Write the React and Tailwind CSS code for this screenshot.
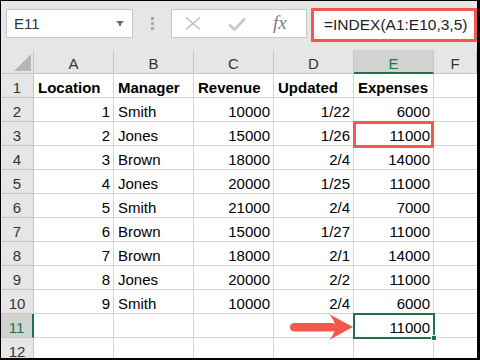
import React from "react";

const rows = [
  ["Location", "Manager", "Revenue", "Updated", "Expenses"],
  ["1", "Smith", "10000", "1/22", "6000"],
  ["2", "Jones", "15000", "1/26", "11000"],
  ["3", "Brown", "18000", "2/4", "14000"],
  ["4", "Jones", "20000", "1/25", "11000"],
  ["5", "Smith", "21000", "2/4", "7000"],
  ["6", "Brown", "15000", "1/27", "11000"],
  ["7", "Brown", "18000", "2/1", "14000"],
  ["8", "Jones", "20000", "2/2", "11000"],
  ["9", "Smith", "10000", "2/4", "6000"],
  ["", "", "", "", "11000"],
  ["", "", "", "", ""],
];

const cols = ["A", "B", "C", "D", "E", "F"];
// which columns hold numbers (right aligned) below the header row
const numeric = [true, false, true, true, true];

function Toolbar() {
  return (
    <div className="flex items-start h-[49px] pl-[5px] pt-[7px] shrink-0">
      <div className="mt-[1px] w-[127px] h-[29px] bg-white border border-[#c6c6c6] flex items-center justify-between pl-[7px] pr-[8px]">
        <span className="text-[15px] text-[#333] pt-[2px]">E11</span>
        <svg width="8" height="5" viewBox="0 0 8 5">
          <path d="M0 0 H8 L5 3 V5 H3 V3 Z" fill="#6b6b6b" />
        </svg>
      </div>
      <div className="w-[38px] flex flex-col items-center gap-[2px] pt-[9px] pl-[1px]">
        <span className="w-[3px] h-[3px] bg-[#a8a8a8]" />
        <span className="w-[3px] h-[3px] bg-[#a8a8a8]" />
        <span className="w-[3px] h-[3px] bg-[#a8a8a8]" />
      </div>
      <div className="mt-[1px] w-[136px] h-[29px] bg-white border border-[#c6c6c6] flex items-center">
        <svg className="ml-[13px]" width="16" height="13" viewBox="0 0 16 13">
          <path d="M1 0.5 L15 12.5 M15 0.5 L1 12.5" stroke="#c2c2c2" strokeWidth="1.6" fill="none" />
        </svg>
        <svg className="ml-[27px]" width="18" height="14" viewBox="0 0 18 14">
          <path d="M1 7.5 L6.5 12.5 L17 1.5" stroke="#c8c8c8" strokeWidth="2.6" fill="none" />
        </svg>
        <span className="ml-[27px] text-[19px] italic text-[#7d7d7d] leading-none pb-[3px] font-['Liberation_Serif',serif]">
          fx
        </span>
      </div>
      <div className="ml-[4px] flex-1 h-[34px] border-[3px] border-[#f4574c] bg-white flex items-center pl-[10px]">
        <span className="text-[15.5px] text-[#222]">=INDEX(A1:E10,3,5)</span>
      </div>
    </div>
  );
}

function HeaderRow() {
  return (
    <div className="flex h-[24px] shrink-0">
      <div className="w-[33px] h-full border-r border-b border-[#c6c6c6] flex items-end justify-end pr-[2px] pb-[2px]">
        <svg width="17" height="17" viewBox="0 0 17 17">
          <path d="M17 0 V17 H0 Z" fill="#b5b5b5" />
        </svg>
      </div>
      {cols.map((c) => {
        const active = c === "E";
        const width = c === "F" ? "flex-1" : "w-[80px]";
        return (
          <div
            key={c}
            className={`${width} h-full border-r border-[#c6c6c6] text-center text-[15px] leading-[19px] pt-[4px] ${
              active
                ? "bg-[#d2d2d2] border-b-2 border-b-[#217346] text-[#217346]"
                : "border-b border-b-[#c6c6c6] text-[#333]"
            }`}
          >
            {c}
          </div>
        );
      })}
    </div>
  );
}

function Arrow() {
  return (
    <svg
      className="absolute left-[287px] top-[312px] z-10"
      width="66"
      height="28"
      viewBox="0 0 66 28"
    >
      <rect x="2" y="10" width="46" height="8.5" rx="4.25" fill="#f4574c" />
      <path d="M41 1 L65 14 L41 27 Q47 20.5 47 14 Q47 7.5 41 1 Z" fill="#f4574c" />
    </svg>
  );
}

function DataRow({ index, cells }) {
  const rowNo = index + 1;
  const selectedRow = rowNo === 11;
  return (
    <div className="flex h-[24px] shrink-0">
      <div
        className={`w-[33px] h-full border-b border-[#c6c6c6] text-center text-[15px] leading-[19px] pt-[4px] ${
          selectedRow
            ? "bg-[#d2d2d2] border-r-2 border-r-[#217346] text-[#217346]"
            : "border-r text-[#333]"
        }`}
      >
        {rowNo}
      </div>
      {cells.map((v, i) => {
        const right = index > 0 && numeric[i];
        const bold = index === 0;
        return (
          <div
            key={i}
            className={`relative w-[80px] h-full bg-white border-r border-b border-[#d4d4d4] text-[15px] leading-[19px] pt-[4px] text-black whitespace-nowrap ${
              right ? "text-right pr-[3px]" : "text-left pl-[4px]"
            } ${bold ? "font-bold" : ""}`}
          >
            {v}
            {rowNo === 3 && i === 4 && (
              <div className="absolute z-10 left-[-1px] top-[-1px] w-[81px] h-[27px] border-[3px] border-[#f4574c]" />
            )}
            {rowNo === 11 && i === 4 && (
              <div className="absolute z-10 left-[-1px] top-[-1px] w-[82px] h-[26px] border-2 border-[#217346]">
                <div className="absolute right-[-4px] bottom-[-4px] w-[6px] h-[6px] bg-[#217346] border border-white" />
              </div>
            )}
          </div>
        );
      })}
      <div className="flex-1 h-full bg-white border-b border-[#d4d4d4]" />
    </div>
  );
}

export default function App() {
  return (
    <div className="w-[480px] h-[360px] bg-black pt-px pl-px pr-[3px] pb-[2px] font-['Liberation_Sans',Arial,sans-serif]">
      <div className="w-full h-full bg-[#e6e6e6] flex flex-col overflow-hidden relative">
        <Toolbar />
        <HeaderRow />
        {rows.map((cells, i) => (
          <DataRow key={i} index={i} cells={cells} />
        ))}
        <Arrow />
      </div>
    </div>
  );
}
